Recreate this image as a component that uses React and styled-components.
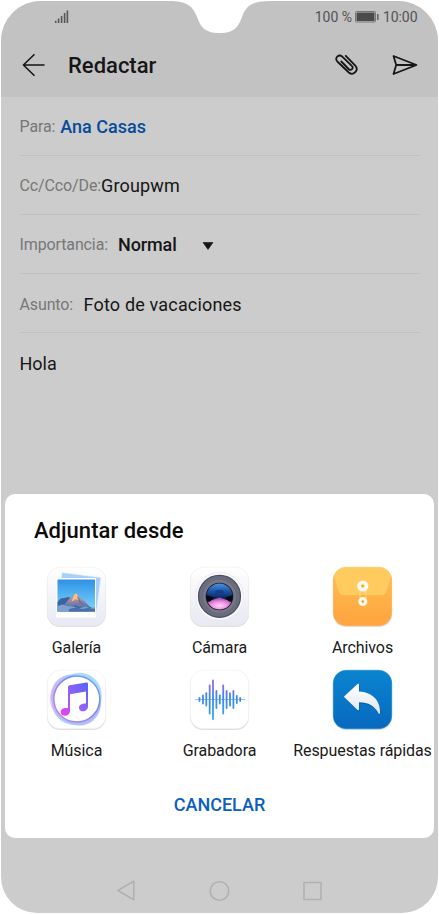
import styled, { createGlobalStyle } from "styled-components";

const GlobalStyle = createGlobalStyle`
  * {
    box-sizing: border-box;
  }

  body {
    margin: 0;
    background-color: #fff;
    font-family: Roboto, "Liberation Sans", sans-serif;
  }

  svg {
    display: block;
    flex: none;
  }
`;

const Phone = styled.div`
  position: relative;
  display: flex;
  flex-direction: column;
  width: 437px;
  height: 912px;
  margin: 1px;
  background-color: #ccc;
  border-radius: 40px 40px 36px 36px;
  overflow: hidden;
`;

const Notch = styled.svg`
  position: absolute;
  top: -1px;
  left: 168px;
`;

const Header = styled.header`
  height: 95.5px;
  background-color: #c2c2c2;
`;

const StatusBar = styled.div`
  display: flex;
  align-items: center;
  justify-content: space-between;
  height: 31px;
  padding: 0 20.5px 0 53px;
`;

const Status = styled.div`
  display: flex;
  align-items: center;
  gap: 3.5px;
  color: #535353;
  font-size: 14px;
  line-height: 16px;
  letter-spacing: -0.05px;
`;

const Toolbar = styled.div`
  display: flex;
  align-items: center;
  height: 64px;
  padding: 2px 20px 0 21px;
`;

const Title = styled.h1`
  flex: 1;
  margin: 2px 0 0 22px;
  color: #161616;
  font-size: 22px;
  font-weight: 500;
  line-height: 28px;
`;

const IconButton = styled.button`
  display: flex;
  padding: 0;
  margin-left: ${({ $left }) => $left || "0"};
  background: none;
  border: none;
  cursor: pointer;
`;

const Form = styled.main`
  flex: 1;
  padding: 0 18px 0 18.5px;
`;

const Row = styled.div`
  display: flex;
  align-items: center;
  height: 59.2px;
  padding-top: 2px;
  border-bottom: 1px solid ${({ $last }) => ($last ? "transparent" : "#c1c1c1")};
`;

const Label = styled.span`
  color: #777;
  font-size: 16px;
  letter-spacing: -0.12px;
`;

const Value = styled.span`
  margin-left: ${({ $left }) => $left || "0"};
  color: ${({ $color }) => $color || "#161616"};
  font-size: 18px;
  font-weight: ${({ $weight }) => $weight || 400};
  letter-spacing: ${({ $spacing }) => $spacing || "0"};
`;

const Caret = styled.svg`
  margin: 2px 0 0 25.5px;
`;

const NavBar = styled.nav`
  display: flex;
  align-items: center;
  justify-content: center;
  gap: 71px;
  height: 45px;
`;

const Sheet = styled.section`
  position: absolute;
  left: 4px;
  right: 4px;
  bottom: 75px;
  height: 343.6px;
  padding-top: 22.5px;
  background-color: #fff;
  border-radius: 10px;
`;

const SheetTitle = styled.h2`
  margin: 0 0 19.6px 29px;
  color: #0b0b0b;
  font-size: 22px;
  font-weight: 500;
  line-height: 28px;
  letter-spacing: 0.03px;
`;

const Grid = styled.div`
  display: grid;
  grid-template-columns: repeat(3, 143px);
  grid-auto-rows: 103px;
`;

const Option = styled.button`
  display: flex;
  flex-direction: column;
  align-items: center;
  padding: 0;
  background: none;
  border: none;
  color: #1a1a1a;
  font-family: inherit;
  font-size: 16px;
  line-height: 20px;
  letter-spacing: -0.08px;
  white-space: nowrap;
  cursor: pointer;
`;

const OptionLabel = styled.span`
  margin-top: 10.8px;
`;

const Cancel = styled.button`
  display: block;
  margin: 22.5px auto 0;
  padding: 0;
  background: none;
  border: none;
  color: #0a60c0;
  font-family: inherit;
  font-size: 18px;
  font-weight: 500;
  line-height: 24px;
  cursor: pointer;
`;

const SignalIcon = () => (
  <svg width="15" height="14" viewBox="0 0 15 14" fill="none" stroke="#555" strokeWidth="1.6">
    <path d="M1.7 13v-2.3M4.6 13V8.6M7.6 13V6M10.6 13V3M13.4 13V.5" />
  </svg>
);

const BatteryIcon = () => (
  <svg width="24" height="12" viewBox="0 0 24 12">
    <rect x=".5" y=".5" width="20" height="10.5" rx="1" fill="none" stroke="#777" />
    <rect x="1.5" y="1.5" width="18" height="8.5" fill="#4b4b4b" />
    <rect x="22" y="3" width="1.6" height="6" fill="#666" />
  </svg>
);

const BackIcon = () => (
  <svg width="24" height="24" viewBox="0 0 24 24" fill="none" stroke="#161616" strokeWidth="1.6" strokeLinecap="round" strokeLinejoin="round">
    <path d="M22 12H1.4M12 1.7L1.4 12 12 22.3" />
  </svg>
);

const ClipIcon = () => (
  <svg width="24" height="22" viewBox="0 0 24 22" fill="none" stroke="#161616" strokeWidth="1.8" strokeLinecap="round" strokeLinejoin="round">
    <path d="M10.800 1.800L20.300 11.700c4 4.300-2 10.800-6.500 6.800L2.300 7.500C-1 4 3.800-.3 7.300 2.700l9.500 9.100c2.300 2.300-.7 5.500-3.200 3.200L6.300 7.500" />
  </svg>
);

const SendIcon = () => (
  <svg width="26" height="22" viewBox="0 0 26 22" fill="none" stroke="#161616" strokeWidth="1.8" strokeLinejoin="round">
    <path d="M1.500 2L24.500 11 1.500 20 4.200 11zM4.200 11H24" />
  </svg>
);

const Tile = ({ id, from = "#fff", to = "#fff", edge = "#ececf0", children }) => (
  <svg width="63" height="63" viewBox="-2 -2 63 63">
    <defs>
      <linearGradient id={id} x1="0" y1="0" x2="0" y2="1">
        <stop offset="0" stopColor={from} />
        <stop offset="1" stopColor={to} />
      </linearGradient>
    </defs>
    <rect x="0" y="1" width="59" height="59" rx="13" fill="#000" opacity=".13" />
    <rect x=".25" y=".25" width="58.5" height="58.5" rx="13" fill={`url(#${id})`} stroke={edge} strokeWidth=".6" />
    {children}
  </svg>
);

const GalleryIcon = () => (
  <Tile id="galleryBg" to="#e8e9f3">
    <defs>
      <linearGradient id="sky" x1="0" y1="0" x2="0" y2="1">
        <stop offset="0" stopColor="#2f91e4" />
        <stop offset=".8" stopColor="#6fcaf8" />
      </linearGradient>
      <linearGradient id="peak" x1="0" y1="0" x2="0" y2="1">
        <stop offset="0" stopColor="#e9a57a" />
        <stop offset=".5" stopColor="#9a86a6" />
        <stop offset="1" stopColor="#4670a8" />
      </linearGradient>
    </defs>
    <path d="M15 5.500l39 5-5 38-5-1V12H14z" fill="#a9cff8" stroke="#e8f3ff" strokeWidth=".7" />
    <rect x="9" y="11" width="40" height="39.5" rx="1" fill="#fff" />
    <rect x="10.500" y="12.500" width="37.5" height="32" fill="url(#sky)" />
    <path d="M10.500 35l3-3.500 3.500-.5 4-1 3.500 1 4-4 5 6 5 3 4.500 4 5 2v2.500H10.500z" fill="#3a639f" />
    <path d="M17 38l6-7 3-1.500 1.500-2.500 1.800-.6 4.200 5.100 4 2.500 5.500 6.500-8 1-6.500-3-6 1z" fill="url(#peak)" />
    <path d="M26.500 29.500l2.300-3.200 1.700 1.700-.5 3 2.500 2.500-4-1.500-4 3z" fill="#ffc183" />
    <path d="M30.500 29l3 5 4 4-5-2z" fill="#6b6c9b" />
    <path d="M10.500 39l5-1.500 5 1.500 6 .5 6 2 6-2 4 1.500 5.500-.5v4H10.500z" fill="#7ea0cf" />
    <path d="M22 42l7-1.500 6 1.500 6-1 7 1v2.500H22z" fill="#315b99" opacity=".7" />
  </Tile>
);

const CameraIcon = () => (
  <Tile id="cameraBg" to="#e7e8f1">
    <defs>
      <linearGradient id="lensTop" x1="0" y1="0" x2="0" y2="1">
        <stop offset="0" stopColor="#4f96e2" />
        <stop offset=".5" stopColor="#1b55a5" />
        <stop offset="1" stopColor="#0b1c4e" />
      </linearGradient>
      <radialGradient id="lensGlow" cx=".5" cy=".65" r=".6">
        <stop offset="0" stopColor="#ffd2f8" />
        <stop offset=".5" stopColor="#ee93e0" />
        <stop offset="1" stopColor="#9a4cae" />
      </radialGradient>
      <clipPath id="lensClip">
        <circle cx="29.5" cy="29.5" r="13" />
      </clipPath>
    </defs>
    <circle cx="29.5" cy="29.3" r="24" fill="#f8f8fb" stroke="#e6e7ed" strokeWidth=".7" />
    <circle cx="29.5" cy="29.3" r="21" fill="#696c7d" stroke="#4a4e61" strokeWidth="1.2" />
    <circle cx="29.5" cy="29.3" r="16.5" fill="#777887" />
    <circle cx="29.5" cy="29.5" r="13.8" fill="#151727" />
    <g clipPath="url(#lensClip)">
      <path d="M16 16h27v12c-4 4-8 4.500-13.500 4.500S20 32 16 28z" fill="url(#lensTop)" />
      <ellipse cx="29.5" cy="25.5" rx="4.5" ry="2.5" fill="#143d86" />
      <path d="M16 35l6-2 7.500-2.500 7.500 2.500 6 2v8H16z" fill="url(#lensGlow)" />
      <path d="M16 28l8 2.500-4 4-4 .5zM43 28l-8 2.500 4 4 4 .5z" fill="#080915" />
    </g>
  </Tile>
);

const FilesIcon = () => (
  <Tile id="filesBg" from="#ffc14f" to="#ffa340" edge="#fcb552">
    <path d="M1.500 8Q5 .5 13 .5h33q8 0 11.500 7.500L53 24q-1 3.500-4 3.500H10q-3 0-4-3.500z" fill="#ffcb5e" stroke="#ffd67c" strokeWidth=".5" />
    <path d="M27 23v11M33 23v11" stroke="#ffdb8c" strokeWidth=".9" />
    <circle cx="29.8" cy="19" r="3.7" fill="#ffc95b" stroke="#fffaf0" strokeWidth="3.8" />
    <circle cx="29.8" cy="34.6" r="2.9" fill="#ffb54c" stroke="#fffaf0" strokeWidth="3.2" />
    <circle cx="29.8" cy="19" r="1.3" fill="#f4a82d" />
    <circle cx="29.8" cy="34.6" r="1.1" fill="#f09323" />
  </Tile>
);

const MusicIcon = () => (
  <Tile id="musicBg">
    <defs>
      <linearGradient id="ring" x1="1" y1="0" x2="0" y2="1">
        <stop offset="0" stopColor="#6aa9f5" />
        <stop offset=".5" stopColor="#8285ed" />
        <stop offset="1" stopColor="#c78df0" />
      </linearGradient>
      <linearGradient id="note" x1="1" y1="0" x2="0" y2="1">
        <stop offset="0" stopColor="#5264f5" />
        <stop offset=".5" stopColor="#9461fb" />
        <stop offset="1" stopColor="#f43de5" />
      </linearGradient>
      <linearGradient id="halo" x1="0" y1="0" x2="1" y2="0">
        <stop offset="0" stopColor="#e3a5ee" />
        <stop offset="1" stopColor="#a7b4f6" />
      </linearGradient>
    </defs>
    <ellipse cx="28.8" cy="30" rx="27" ry="23.5" transform="rotate(50 28.8 30)" fill="#a9b6f6" opacity=".8" />
    <ellipse cx="29.8" cy="28.8" rx="27" ry="23.8" transform="rotate(-55 29.8 28.8)" fill="#92cffa" opacity=".75" />
    <ellipse cx="28.5" cy="30.5" rx="26" ry="23.5" transform="rotate(20 28.5 30.5)" fill="url(#halo)" opacity=".55" />
    <circle cx="29.8" cy="29" r="23" fill="#fff" stroke="url(#ring)" strokeWidth="1.5" />
    <path d="M21 17.200q0-1.700 1.600-2l16.800-2.700q1.600-.2 1.600 1.400v22.400c0 6.500-9 6.500-9 1.400 0-3 3-4.300 7-4.300V21.500l-16 2.800v16.500c0 6.500-9.300 6.300-9.300 1.400 0-3.300 3.500-4.500 7.300-4z" fill="url(#note)" />
  </Tile>
);

// x, top and bottom of each bar of the sound wave
const bars = [
  [9.5, 27, 32], [13, 24.5, 34.5], [16.3, 22.3, 36.5],
  [19.7, 14.5, 44.5], [23, 9.5, 50], [26.4, 20, 39],
  [29.8, 24.5, 34.5], [33.2, 14.5, 44.5], [36.6, 20, 39],
  [40, 22.3, 36.5], [43.4, 20, 39], [46.8, 25, 34],
  [50.2, 27, 32],
];

const RecorderIcon = () => (
  <Tile id="recorderBg">
    <defs>
      <linearGradient id="wave" gradientUnits="userSpaceOnUse" x1="0" y1="9" x2="0" y2="51">
        <stop offset="0" stopColor="#a765ed" />
        <stop offset=".45" stopColor="#3e87ea" />
        <stop offset="1" stopColor="#34adfb" />
      </linearGradient>
    </defs>
    <path d="M5 29.500h50" stroke="#78b7f4" strokeWidth=".8" />
    {bars.map(([x, top, bottom]) => (
      <rect key={x} x={x - 0.9} y={top} width="1.8" height={bottom - top} rx=".9" fill="url(#wave)" />
    ))}
  </Tile>
);

const RepliesIcon = () => (
  <Tile id="repliesBg" from="#0a84cf" to="#0869bf" edge="#168bd1">
    <defs>
      <linearGradient id="arrow" x1="0" y1="0" x2="0" y2="1">
        <stop offset="0" stopColor="#fff" />
        <stop offset="1" stopColor="#dde5f2" />
      </linearGradient>
    </defs>
    <path d="M11.500 28L25 15.200q1.500-1 1.500 1v6.400C40 23.500 48.500 32 47.500 44q-.4 1.800-1.500.3C42 37 36 33.500 26.500 33.500v6.800q0 2-1.500.8z" fill="#064889" opacity=".55" />
    <path d="M10.800 26.800L24.500 14q1.500-1 1.500 1v6.400C39.500 22 48 31 47 43q-.4 1.800-1.500.2C41.500 36 35.500 32.300 26 32.300v6.800q0 2-1.500.8z" fill="url(#arrow)" />
  </Tile>
);

const options = [
  { label: "Galería", icon: <GalleryIcon /> },
  { label: "Cámara", icon: <CameraIcon /> },
  { label: "Archivos", icon: <FilesIcon /> },
  { label: "Música", icon: <MusicIcon /> },
  { label: "Grabadora", icon: <RecorderIcon /> },
  { label: "Respuestas rápidas", icon: <RepliesIcon /> },
];

const App = () => {
  return (
    <>
      <GlobalStyle />
      <Phone>
        <Header>
          <StatusBar>
            <SignalIcon />
            <Status>
              <span>100 %</span>
              <BatteryIcon />
              <span>10:00</span>
            </Status>
          </StatusBar>
          <Toolbar>
            <IconButton aria-label="Atrás">
              <BackIcon />
            </IconButton>
            <Title>Redactar</Title>
            <IconButton aria-label="Adjuntar">
              <ClipIcon />
            </IconButton>
            <IconButton aria-label="Enviar" $left="33px">
              <SendIcon />
            </IconButton>
          </Toolbar>
        </Header>

        <Form>
          <Row>
            <Label>Para:</Label>
            <Value $left="5px" $color="#064b9b" $weight={500}>Ana Casas</Value>
          </Row>
          <Row>
            <Label>Cc/Cco/De:</Label>
            <Value $spacing="0.15px">Groupwm</Value>
          </Row>
          <Row>
            <Label>Importancia:</Label>
            <Value $left="10px" $weight={500} $spacing="-0.1px">Normal</Value>
            <Caret width="12" height="8" viewBox="0 0 12 8">
              <path d="M1 .5h10L6 7.500z" fill="#161616" stroke="#161616" strokeWidth=".6" strokeLinejoin="round" />
            </Caret>
          </Row>
          <Row>
            <Label>Asunto:</Label>
            <Value $left="10.5px" $spacing="0.17px">Foto de vacaciones</Value>
          </Row>
          <Row $last>
            <Value>Hola</Value>
          </Row>
        </Form>

        <NavBar>
          <svg width="22" height="22" viewBox="0 0 22 22" fill="none" stroke="#b1b1b1" strokeWidth="1.6" strokeLinejoin="round">
            <path d="M17.800 1.300v18.400L1.800 10.500z" />
          </svg>
          <svg width="22" height="22" viewBox="0 0 22 22" fill="none" stroke="#b1b1b1" strokeWidth="1.6">
            <circle cx="10.5" cy="11" r="9.3" />
          </svg>
          <svg width="22" height="22" viewBox="0 0 22 22" fill="none" stroke="#b1b1b1" strokeWidth="1.6" strokeLinejoin="round">
            <rect x="2" y="2.5" width="17" height="17" />
          </svg>
        </NavBar>

        <Sheet>
          <SheetTitle>Adjuntar desde</SheetTitle>
          <Grid>
            {options.map(({ label, icon }) => (
              <Option key={label}>
                {icon}
                <OptionLabel>{label}</OptionLabel>
              </Option>
            ))}
          </Grid>
          <Cancel>CANCELAR</Cancel>
        </Sheet>

        <Notch width="101" height="34" viewBox="0 0 101 34">
          <path d="M0 0v1C18 1 24 6 28 17c4 11 9 16 21 16h3c12 0 17-5 21-16C77 6 83 1 101 1V0z" fill="#fff" />
        </Notch>
      </Phone>
    </>
  );
};

export default App;
